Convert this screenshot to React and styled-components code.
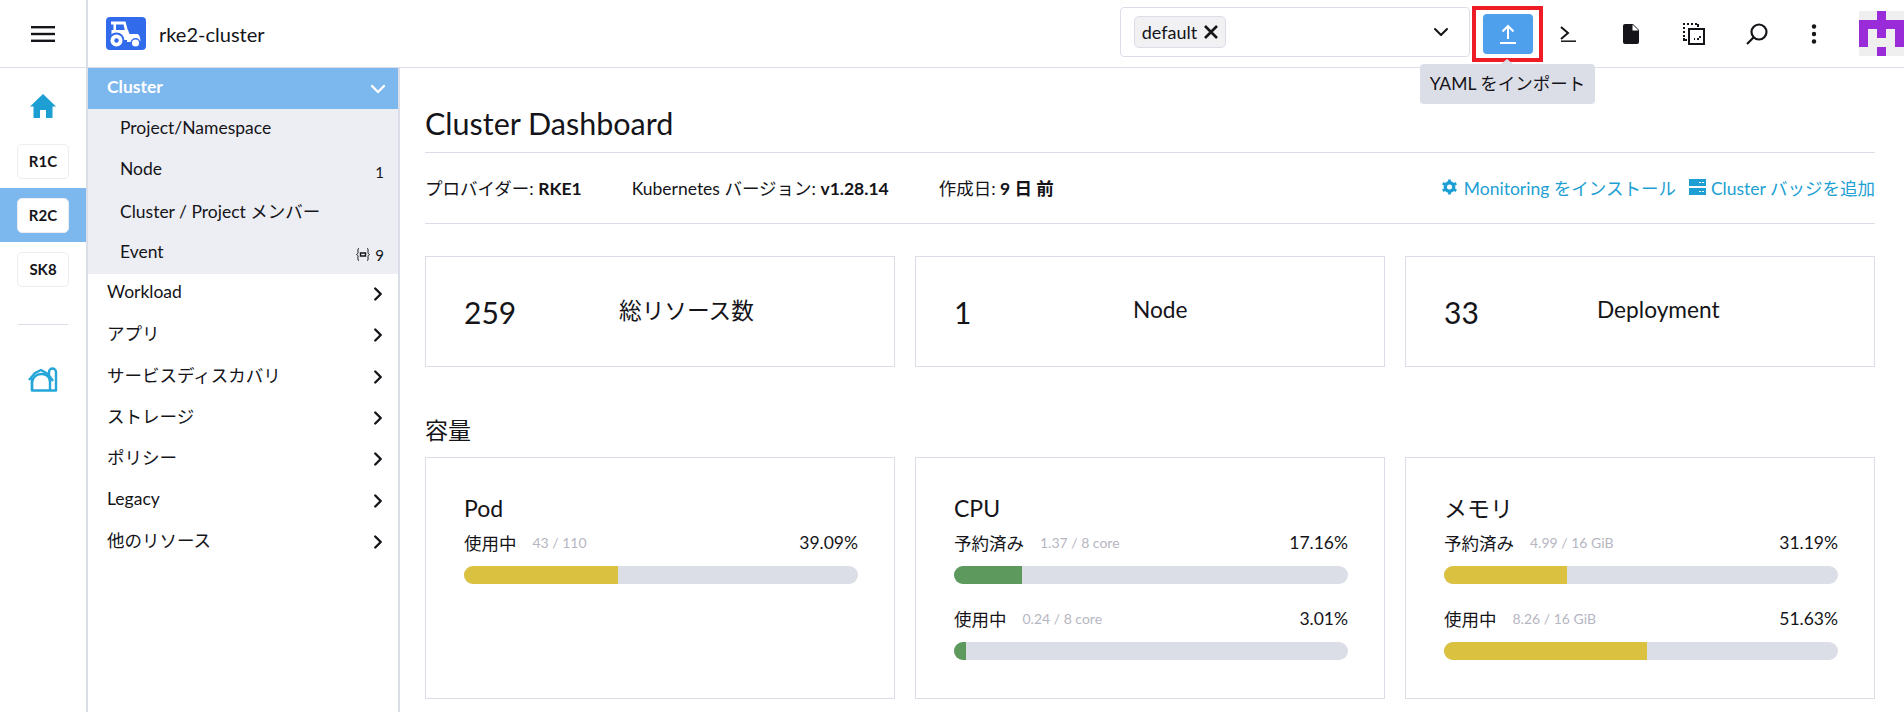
import styled, { createGlobalStyle } from "styled-components";
import { ChevronRight, ChevronDown } from "lucide-react";

const GlobalStyle = createGlobalStyle`
    html, body {
        margin: 0;
        height: 712px;
        overflow: hidden;
        background: #fff;
        font-family: Lato, "Noto Sans CJK JP", sans-serif;
        color: #141419;
    }
    * { box-sizing: border-box; }
`

const Page = styled.div`
    display: grid;
    grid-template-columns: 88px 312px 1fr;
    grid-template-rows: 68px 644px;
    width: 1904px;
    height: 712px;
    overflow: hidden;
`

const Header = styled.header`
    grid-column: 1 / 4;
    display: flex;
    align-items: center;
    border-bottom: 1px solid #dcdee7;
    position: relative;
`

const MenuCell = styled.div`
    width: 88px;
    height: 67px;
    display: flex;
    align-items: center;
    justify-content: center;
    border-right: 2px solid #dcdee7;
`

const ClusterName = styled.div`
    display: flex;
    align-items: center;
    gap: 13px;
    margin-left: 18px;
    font-size: 20px;
    flex: 1;
`

const NamespaceSelect = styled.div`
    width: 350px;
    height: 50px;
    margin-bottom: 3px;
    border: 1px solid #dcdee7;
    border-radius: 4px;
    display: flex;
    align-items: center;
    justify-content: space-between;
    padding: 0 16px 0 13px;
`

const Chip = styled.div`
    height: 32px;
    width: 92px;
    display: flex;
    align-items: center;
    justify-content: center;
    gap: 7px;
    font-size: 18px;
    background: #f1f1f4;
    border: 1px solid #dcdee7;
    border-radius: 5px;
`

const ImportButton = styled.button`
    width: 50px;
    height: 40px;
    margin-left: 13px;
    display: flex;
    align-items: center;
    justify-content: center;
    background: #4e9fec;
    border: none;
    border-radius: 4px;
    padding: 0;
    position: relative;
`

const Highlight = styled.span`
    position: absolute;
    left: -11px;
    top: -8px;
    width: 71px;
    height: 56px;
    border: 4px solid #ee1c25;
`

const Tooltip = styled.div`
    position: absolute;
    left: 1420px;
    top: 64px;
    width: 175px;
    height: 40px;
    display: flex;
    align-items: center;
    justify-content: center;
    padding-bottom: 3px;
    font-size: 17.5px;
    background: #dcdee7;
    border-radius: 4px;
    z-index: 2;
    &::before {
        content: "";
        position: absolute;
        left: 81px;
        top: -5px;
        border-left: 6px solid transparent;
        border-right: 6px solid transparent;
        border-bottom: 5px solid #dcdee7;
    }
`

const ToolIcons = styled.div`
    display: flex;
    align-items: center;
    margin-left: 3.5px;
`

const ToolIcon = styled.div`
    width: ${props => props.$width || 63}px;
    height: 40px;
    display: flex;
    align-items: center;
    justify-content: center;
`

const Avatar = styled.div`
    width: 45px;
    height: 45px;
    margin-left: 19.5px;
    display: grid;
    grid-template-columns: repeat(5, 9px);
    grid-auto-rows: 9px;
    background: #efefef;
`

const AvatarCell = styled.span`
    background: ${props => props.$on ? "#9a2bd8" : "transparent"};
`

const Rail = styled.nav`
    border-right: 2px solid #dcdee7;
    display: flex;
    flex-direction: column;
    align-items: center;
    padding-top: 26px;
`

const RailHome = styled.div`
    height: 40px;
    display: flex;
    align-items: flex-start;
`

const RailRow = styled.div`
    width: 86px;
    height: 54px;
    display: flex;
    align-items: center;
    justify-content: center;
    background: ${props => props.$active ? "#7cb7ee" : "transparent"};
`

const RailBadge = styled.div`
    width: 52px;
    height: 35px;
    display: flex;
    align-items: center;
    justify-content: center;
    background: #fff;
    border: 1px solid #ecedf2;
    border-radius: 5px;
    font-size: 15px;
    font-weight: 700;
`

const RailDivider = styled.div`
    width: 50px;
    height: 1px;
    margin: 28px 0 41px;
    background: #dcdee7;
`

const Side = styled.aside`
    border-right: 2px solid #dcdee7;
    display: flex;
    flex-direction: column;
`

const GroupRow = styled.div`
    height: 41.3px;
    display: flex;
    align-items: center;
    justify-content: space-between;
    padding: 0 9px 0 19px;
    font-size: 17.5px;
`

const ActiveGroup = styled(GroupRow)`
    color: #fff;
    font-weight: 700;
    background: #7cb7ee;
    padding-right: 8px;
`

const RowLabel = styled.span`
    padding-bottom: 5px;
`

const SubList = styled.div`
    background: #edeef3;
    margin-bottom: -1px;
`

const SubRow = styled.div`
    height: 41.3px;
    display: flex;
    align-items: center;
    justify-content: space-between;
    padding: 0 14px 0 32px;
    font-size: 17.5px;
`

const Count = styled.span`
    display: flex;
    align-items: center;
    gap: 5px;
    font-size: 15px;
    padding-top: 2px;
`

const Main = styled.main`
    padding: 0 29px 0 25px;
`

const PageTitle = styled.h1`
    margin: 0;
    height: 85px;
    display: flex;
    align-items: center;
    padding-top: 26px;
    font-size: 30.5px;
    font-weight: 400;
    border-bottom: 1px solid #dcdee7;
`

const MetaBar = styled.div`
    height: 71px;
    display: flex;
    align-items: center;
    justify-content: space-between;
    padding-bottom: 2px;
    border-bottom: 1px solid #dcdee7;
    font-size: 17.5px;
`

const MetaList = styled.div`
    display: flex;
    gap: 50px;
`

const Links = styled.div`
    display: flex;
    gap: 13px;
`

const MetaLink = styled.a`
    display: flex;
    align-items: center;
    gap: ${props => props.$gap}px;
    color: #1d9fd3;
    font-size: 17.5px;
`

const CardGrid = styled.div`
    display: grid;
    grid-template-columns: repeat(3, 1fr);
    gap: 20px;
`

const CountCard = styled.div`
    height: 111px;
    margin-top: 32px;
    border: 1px solid #dcdee7;
    display: flex;
    align-items: center;
`

const CountValue = styled.div`
    width: ${props => props.$width}px;
    padding-left: 38px;
    font-size: 30px;
    flex: none;
`

const CountLabel = styled.div`
    font-size: 22.7px;
    padding-bottom: 4px;
`

const SectionHeading = styled.h3`
    margin: 0;
    height: 90px;
    display: flex;
    align-items: flex-end;
    padding-bottom: 11px;
    font-size: 23px;
    font-weight: 400;
`

const GaugeCard = styled.div`
    height: 242px;
    border: 1px solid #dcdee7;
    padding: 36px 36px 0 38px;
`

const GaugeTitle = styled.div`
    font-size: 23px;
    line-height: 28px;
    margin-bottom: 8px;
`

const Gauge = styled.div`
    margin-bottom: 22px;
`

const GaugeHead = styled.div`
    display: flex;
    align-items: center;
    justify-content: space-between;
    height: 26px;
    padding-bottom: 2px;
    margin-bottom: 10px;
    font-size: 17.5px;
`

const GaugeLabel = styled.div`
    display: flex;
    align-items: center;
    gap: 16px;
`

const GaugeAmount = styled.span`
    font-size: 14px;
    color: #b6b6c2;
`

const Track = styled.div`
    height: 18px;
    border-radius: 9px;
    background: #dcdee7;
    overflow: hidden;
`

const Fill = styled.div`
    height: 100%;
    background: ${props => props.$color};
`

const YELLOW = "#dac13f";
const GREEN = "#5d995d";

const AVATAR = [
    "00100",
    "11111",
    "10101",
    "10001",
    "00100",
];

const SUB_ITEMS = [
    { name: "Project/Namespace" },
    { name: "Node", count: "1" },
    { name: "Cluster / Project メンバー" },
    { name: "Event", count: "9", ns: true },
];

const GROUPS = ["Workload", "アプリ", "サービスディスカバリ", "ストレージ", "ポリシー", "Legacy", "他のリソース"];

const COUNTS = [
    { value: "259", label: "総リソース数", width: 193 },
    { value: "1", label: "Node", width: 217 },
    { value: "33", label: "Deployment", width: 191 },
];

const GAUGES = [
    {
        title: "Pod",
        rows: [{ label: "使用中", amount: "43 / 110", pct: 39.09, color: YELLOW }],
    },
    {
        title: "CPU",
        rows: [
            { label: "予約済み", amount: "1.37 / 8 core", pct: 17.16, color: GREEN },
            { label: "使用中", amount: "0.24 / 8 core", pct: 3.01, color: GREEN },
        ],
    },
    {
        title: "メモリ",
        rows: [
            { label: "予約済み", amount: "4.99 / 16 GiB", pct: 31.19, color: YELLOW },
            { label: "使用中", amount: "8.26 / 16 GiB", pct: 51.63, color: YELLOW },
        ],
    },
];

function TractorLogo() {
    return (
        <svg width="40" height="33" viewBox="0 0 40 33">
            <rect width="40" height="33" rx="4" fill="#316bec" />
            <path d="M5 4.500h14.500L22 14H19L17.500 7.500H10V13H7.500V7.500H5z" fill="#fff" />
            <path d="M5.500 13H22l1.500 4H31c2 0 3 2 3.500 7l-1 1H21v-2H7l-1.500-3z" fill="#fff" />
            <circle cx="10.500" cy="23.500" r="8" fill="#316bec" />
            <circle cx="10.500" cy="23.500" r="6" fill="#fff" />
            <circle cx="10.500" cy="23.500" r="2.200" fill="#316bec" />
            <circle cx="29.500" cy="26" r="5" fill="#316bec" />
            <circle cx="29.500" cy="26" r="3.600" fill="#fff" />
        </svg>
    );
}

function HomeIcon() {
    return (
        <svg width="26" height="24" viewBox="0 0 26 24" fill="#1d9fd3">
            <path d="M13 0 26 12.500h-3.500V24H16v-8h-6v8H3.500V12.500H0z" />
        </svg>
    );
}

function HarvesterIcon() {
    return (
        <svg width="30" height="26" viewBox="0 0 30 26" fill="none" stroke="#25a6d8" strokeWidth="2.400" strokeLinejoin="round">
            <path d="M1 14 7 7l6-3 7 4 5 7" />
            <path d="M4 12v12.500h24V6a3.500 3.500 0 0 0-7 0v3" />
            <path d="M4 24v-8a9 9 0 0 1 9-8 8 8 0 0 1 9 8v8" />
        </svg>
    );
}

function RailMenuIcon() {
    return (
        <svg width="24" height="16" viewBox="0 0 24 16" fill="#141419">
            <rect y="0" width="24" height="2.400" />
            <rect y="6.800" width="24" height="2.400" />
            <rect y="13.600" width="24" height="2.400" />
        </svg>
    );
}

function UploadIcon() {
    return (
        <svg width="18" height="20" viewBox="0 0 18 20" fill="none" stroke="#fff" strokeWidth="2">
            <path d="M9 15V2M3.500 7.500 9 2l5.500 5.500" />
            <path d="M1 19h16" />
        </svg>
    );
}

function ShellIcon() {
    return (
        <svg width="16" height="16" viewBox="0 0 16 16" fill="none" stroke="#141419" strokeWidth="2">
            <path d="M1 1l7 6-7 6" />
            <path d="M1 15.200h15" strokeWidth="1.500" />
        </svg>
    );
}

function FileIcon() {
    return (
        <svg width="16" height="20" viewBox="0 0 16 20">
            <path d="M2 0h8l6 6v12a2 2 0 0 1-2 2H2a2 2 0 0 1-2-2V2a2 2 0 0 1 2-2z" fill="#141419" />
            <path d="M9.500 0.500v6h6z" fill="#fff" />
        </svg>
    );
}

function CopyConfigIcon() {
    return (
        <svg width="22" height="22" viewBox="0 0 22 22" fill="none" stroke="#141419">
            <path d="M1 14V1h13" strokeWidth="2" strokeDasharray="2 2" />
            <path d="M1 15v2h3M15 1v3" strokeWidth="2" />
            <rect x="6" y="6" width="15" height="15" strokeWidth="2" />
            <path d="M14 16h3v-4M11 16h1" strokeWidth="1.800" strokeDasharray="2 2" />
        </svg>
    );
}

function SearchIcon() {
    return (
        <svg width="22" height="22" viewBox="0 0 22 22" fill="none" stroke="#141419" strokeWidth="2.200">
            <circle cx="13" cy="9" r="7.500" />
            <path d="M7.500 14.500 1 21" />
        </svg>
    );
}

function DotsIcon() {
    return (
        <svg width="6" height="20" viewBox="0 0 6 20" fill="#141419">
            <circle cx="3" cy="2.500" r="2.200" />
            <circle cx="3" cy="10" r="2.200" />
            <circle cx="3" cy="17.500" r="2.200" />
        </svg>
    );
}

function CloseIcon() {
    return (
        <svg width="14" height="14" viewBox="0 0 14 14" stroke="#141419" strokeWidth="2.600">
            <path d="M1 1l12 12M13 1 1 13" />
        </svg>
    );
}

function GearIcon() {
    return (
        <svg width="15" height="16" viewBox="0 0 16 16">
            <circle cx="8" cy="8" r="4.500" fill="none" stroke="#1d9fd3" strokeWidth="3.600" />
            <g stroke="#1d9fd3" strokeWidth="3">
                <path d="M8 0v3M8 13v3M0.800 4l2.600 1.500M12.600 10.500l2.600 1.500M0.800 12l2.600-1.500M12.600 5.500 15.200 4" />
            </g>
        </svg>
    );
}

function BadgeIcon() {
    return (
        <svg width="17" height="16" viewBox="0 0 17 16">
            <rect y="0" width="17" height="7" fill="#1d9fd3" />
            <rect y="9" width="17" height="7" fill="#1d9fd3" />
            <path d="M10 3.500h2M13 3.500h2M10 12.500h2M13 12.500h2" stroke="#fff" />
        </svg>
    );
}

function NamespacedIcon() {
    return (
        <svg width="14" height="13" viewBox="0 0 14 13" fill="none" stroke="#141419">
            <path d="M3 .5C1.500.5 2 2 2 4.500 2 5.500 1 6.500.5 6.500 1 6.500 2 7.500 2 8.500 2 11 1.500 12.500 3 12.500" />
            <path d="M11 .5c1.500 0 1 1.500 1 4 0 1 1 2 1.500 2-.5 0-1.500 1-1.500 2 0 2.500.5 4-1 4" />
            <path d="M4.500 5h5v3h-5z" strokeWidth="1.400" />
        </svg>
    );
}

export default function App() {
    return (
        <Page>
            <GlobalStyle />
            <Header>
                <MenuCell><RailMenuIcon /></MenuCell>
                <ClusterName><TractorLogo />rke2-cluster</ClusterName>
                <NamespaceSelect>
                    <Chip>default <CloseIcon /></Chip>
                    <ChevronDown size={24} strokeWidth={2} />
                </NamespaceSelect>
                <ImportButton><UploadIcon /><Highlight /></ImportButton>
                <ToolIcons>
                    <ToolIcon><ShellIcon /></ToolIcon>
                    <ToolIcon><FileIcon /></ToolIcon>
                    <ToolIcon><CopyConfigIcon /></ToolIcon>
                    <ToolIcon><SearchIcon /></ToolIcon>
                    <ToolIcon $width={51}><DotsIcon /></ToolIcon>
                </ToolIcons>
                <Avatar>
                    {AVATAR.join("").split("").map((cell, idx) => {
                        return <AvatarCell key={idx} $on={cell === "1"} />;
                    })}
                </Avatar>
                <Tooltip>YAML をインポート</Tooltip>
            </Header>

            <Rail>
                <RailHome><HomeIcon /></RailHome>
                <RailRow><RailBadge>R1C</RailBadge></RailRow>
                <RailRow $active><RailBadge>R2C</RailBadge></RailRow>
                <RailRow><RailBadge>SK8</RailBadge></RailRow>
                <RailDivider />
                <HarvesterIcon />
            </Rail>

            <Side>
                <ActiveGroup><RowLabel>Cluster</RowLabel><ChevronDown size={24} strokeWidth={2.400} /></ActiveGroup>
                <SubList>
                    {SUB_ITEMS.map((item, idx) => {
                        return (
                            <SubRow key={idx}>
                                <RowLabel>{item.name}</RowLabel>
                                {item.count && <Count>{item.ns && <NamespacedIcon />}{item.count}</Count>}
                            </SubRow>
                        );
                    })}
                </SubList>
                {GROUPS.map((group, idx) => {
                    return <GroupRow key={idx}><RowLabel>{group}</RowLabel><ChevronRight size={22} strokeWidth={2.600} /></GroupRow>;
                })}
            </Side>

            <Main>
                <PageTitle>Cluster Dashboard</PageTitle>
                <MetaBar>
                    <MetaList>
                        <span>プロバイダー: <b>RKE1</b></span>
                        <span>Kubernetes バージョン: <b>v1.28.14</b></span>
                        <span>作成日: <b>9 日 前</b></span>
                    </MetaList>
                    <Links>
                        <MetaLink $gap={7}><GearIcon />Monitoring をインストール</MetaLink>
                        <MetaLink $gap={5}><BadgeIcon />Cluster バッジを追加</MetaLink>
                    </Links>
                </MetaBar>
                <CardGrid>
                    {COUNTS.map((item, idx) => {
                        return (
                            <CountCard key={idx}>
                                <CountValue $width={item.width}>{item.value}</CountValue>
                                <CountLabel>{item.label}</CountLabel>
                            </CountCard>
                        );
                    })}
                </CardGrid>
                <SectionHeading>容量</SectionHeading>
                <CardGrid>
                    {GAUGES.map((card, idx) => {
                        return (
                            <GaugeCard key={idx}>
                                <GaugeTitle>{card.title}</GaugeTitle>
                                {card.rows.map((row, rowIdx) => {
                                    return (
                                        <Gauge key={rowIdx}>
                                            <GaugeHead>
                                                <GaugeLabel>{row.label}<GaugeAmount>{row.amount}</GaugeAmount></GaugeLabel>
                                                <span>{row.pct.toFixed(2)}%</span>
                                            </GaugeHead>
                                            <Track><Fill $color={row.color} style={{width: `${row.pct}%`}} /></Track>
                                        </Gauge>
                                    );
                                })}
                            </GaugeCard>
                        );
                    })}
                </CardGrid>
            </Main>
        </Page>
    );
}
